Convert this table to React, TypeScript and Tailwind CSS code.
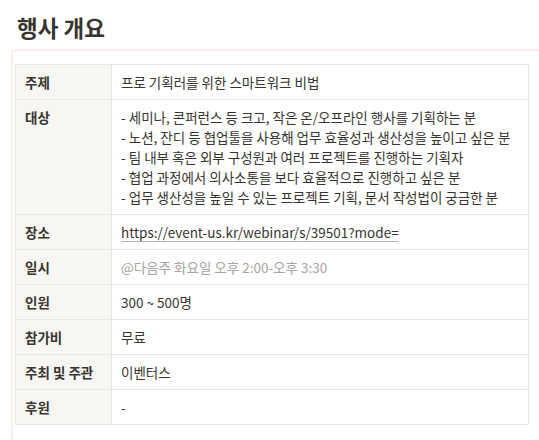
const rows: { label: string; value: React.ReactNode }[] = [
  { label: "주제", value: "프로 기획러를 위한 스마트워크 비법" },
  {
    label: "대상",
    value: (
      <>
        <div>- 세미나, 콘퍼런스 등 크고, 작은 온/오프라인 행사를 기획하는 분</div>
        <div>- 노션, 잔디 등 협업툴을 사용해 업무 효율성과 생산성을 높이고 싶은 분</div>
        <div>- 팀 내부 혹은 외부 구성원과 여러 프로젝트를 진행하는 기획자</div>
        <div>- 협업 과정에서 의사소통을 보다 효율적으로 진행하고 싶은 분</div>
        <div>- 업무 생산성을 높일 수 있는 프로젝트 기획, 문서 작성법이 궁금한 분</div>
      </>
    ),
  },
  {
    label: "장소",
    value: (
      <a className="underline decoration-[#b5b4b0] underline-offset-[3px]">
        https://event-us.kr/webinar/s/39501?mode=
      </a>
    ),
  },
  {
    label: "일시",
    value: <span className="text-[#a5a4a0]">@다음주 화요일 오후 2:00-오후 3:30</span>,
  },
  { label: "인원", value: "300 ~ 500명" },
  { label: "참가비", value: "무료" },
  { label: "주최 및 주관", value: "이벤터스" },
  { label: "후원", value: "-" },
];

export default function App() {
  return (
    <div
      className="h-[440px] w-[539px] overflow-hidden bg-white text-[#37352f]"
      style={{ fontFamily: '"Noto Sans CJK KR", "Noto Sans", sans-serif' }}
    >
      <h2 className="pl-[17px] pt-[12px] text-[22.5px] font-bold leading-[30px]">행사 개요</h2>

      {/* 선택된 블록 하이라이트 */}
      <div className="ml-[11px] mt-[7px] w-[560px] rounded-tl-[4px] border-l-2 border-t-2 border-[#fcecea] pl-[2px] pt-[13px] pb-[20px]">
        <table className="w-[514px] border-collapse text-[13.5px] leading-5">
          <tbody>
            {rows.map((r) => (
              <tr key={r.label}>
                <td className="w-[96px] border border-[#e6e5e2] bg-[#f7f6f3] px-[9px] py-[7px] align-top font-semibold">
                  {r.label}
                </td>
                <td className="border border-[#e6e5e2] px-[9px] py-[7px] align-top">{r.value}</td>
              </tr>
            ))}
          </tbody>
        </table>
      </div>
    </div>
  );
}
